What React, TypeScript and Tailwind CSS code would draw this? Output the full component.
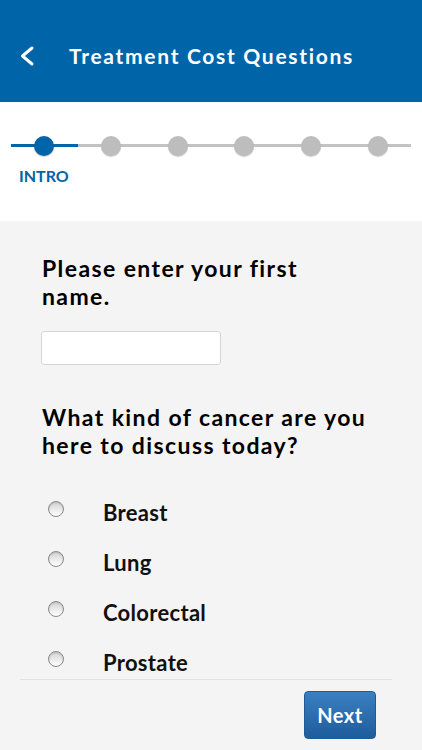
const font = { fontFamily: "Lato, 'Noto Sans', sans-serif" };

const options = ["Breast", "Lung", "Colorectal", "Prostate"];

function Radio() {
  return (
    <span className="block w-[16px] h-[16px] rounded-full border border-[#8a8a8a] bg-gradient-to-b from-[#d4d4d4] to-white shadow-[inset_0_1px_2px_rgba(0,0,0,0.15)]" />
  );
}

export default function App() {
  return (
    <div className="w-[422px] h-[750px] overflow-hidden bg-[#f4f4f4] flex flex-col" style={font}>
      <header className="h-[102px] bg-[#0064a8] flex items-center pt-[10px] shrink-0">
        <svg className="ml-[19px] w-[16px] h-[22px]" viewBox="0 0 16 22" fill="none">
          <path d="M13 3 L3.5 11 L13 19" stroke="white" strokeWidth="3" strokeLinecap="round" strokeLinejoin="round" />
        </svg>
        <h1 className="ml-[34px] text-white text-[21px] font-bold tracking-[1.7px]">Treatment Cost Questions</h1>
      </header>

      <div className="h-[119px] bg-white shrink-0 pt-[34px]">
        <div className="relative mx-[11px] h-[20px]">
          <div className="absolute left-0 right-0 top-[8px] h-[3px] bg-[#c3c3c3]" />
          <div className="absolute left-0 w-[67px] top-[8px] h-[3px] bg-[#0064a8]" />
          <div className="absolute inset-0 flex justify-between px-[23px]">
            {[0, 1, 2, 3, 4, 5].map((i) => (
              <span
                key={i}
                className={
                  i === 0
                    ? "block w-[20px] h-[20px] rounded-full bg-[#0064a8] shadow-[0_1px_1px_rgba(0,0,0,0.2)]"
                    : "block w-[20px] h-[20px] rounded-full bg-[#bdbdbd] shadow-[0_1px_1px_rgba(0,0,0,0.2)]"
                }
              />
            ))}
          </div>
        </div>
        <div className="ml-[19px] mt-[12px] text-[16px] font-bold text-[#0064a8] leading-none">INTRO</div>
      </div>

      <main className="flex-1 flex flex-col px-[20px]">
        <div className="px-[22px] pt-[34px]">
          <h2 className="text-[23px] font-bold leading-[27.5px] text-black tracking-[1.4px]">
            Please enter your first
            <br />
            name.
          </h2>
          <input
            type="text"
            className="block mt-[21px] -ml-[1px] w-[180px] h-[34px] bg-white border border-[#d6d6d6] rounded-[3px]"
          />
          <h2 className="mt-[39px] text-[23px] font-bold leading-[27.5px] text-black tracking-[1.4px]">
            What kind of cancer are you
            <br />
            here to discuss today?
          </h2>
        </div>
        <ul className="mt-[42px] flex flex-col gap-[26px] pl-[28px]">
          {options.map((o) => (
            <li key={o} className="flex items-start h-[24px]">
              <Radio />
              <span className="ml-[39px] text-[22px] leading-[24px] font-bold text-[#111] tracking-[0.3px]">{o}</span>
            </li>
          ))}
        </ul>
        <div className="mt-[4px] border-t border-[#e2e2e2] mr-[10px]" />
        <div className="flex justify-end pr-[26px] pt-[11px]">
          <button className="w-[72px] h-[48px] rounded-[4px] border border-[#1f5b94] bg-gradient-to-b from-[#3b80c2] to-[#1e5c9c] text-white text-[20px] font-bold tracking-[0.5px]">
            Next
          </button>
        </div>
      </main>
    </div>
  );
}
